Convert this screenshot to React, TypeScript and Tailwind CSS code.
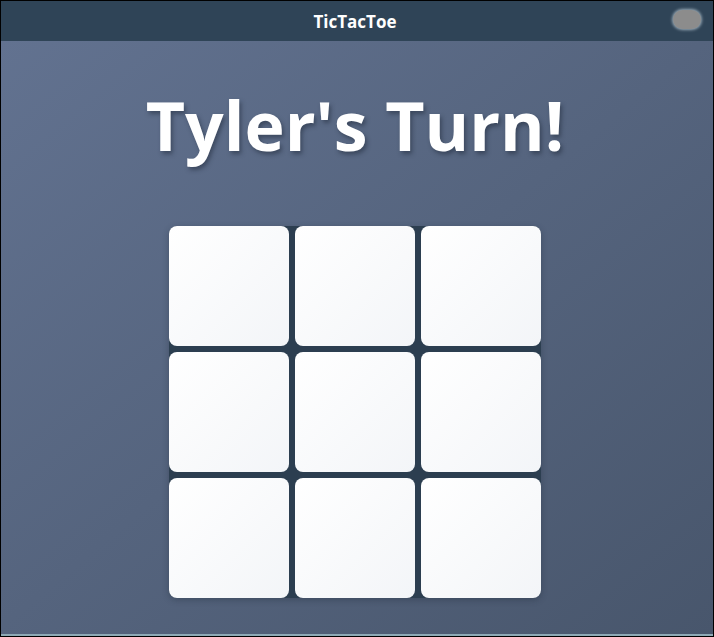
import React from 'react';

const cells = [0, 1, 2, 3, 4, 5, 6, 7, 8];

export default function App() {
  return (
    <div className="h-[637px] w-[714px] border border-black bg-black flex flex-col overflow-hidden font-['Open_Sans',sans-serif]">
      {/* title bar */}
      <div className="relative h-[40px] shrink-0 bg-[#2f4457] flex items-center justify-center pr-[4px]">
        <span className="text-white font-bold text-[17px] leading-none">TicTacToe</span>
        <div className="absolute right-[12px] top-[9px] h-[19px] w-[28px] rounded-full bg-[#8c8c8c] shadow-[0_0_3px_1px_rgba(200,215,225,0.7)]" />
      </div>

      {/* game area */}
      <div className="flex-1 flex flex-col items-center pr-[4px] bg-gradient-to-br from-[#627290] to-[#48566c] border-b-2 border-[#8eaab6]">
        <h1 className="mt-[50px] text-white font-bold text-[68px] leading-[68px] [text-shadow:2px_3px_4px_rgba(30,40,55,0.5)]">
          Tyler's Turn!
        </h1>
        <div className="mt-[67px] grid grid-cols-3 gap-[6px] bg-[#2c3e50] rounded-[8px] shadow-[0_2px_6px_rgba(30,40,55,0.35)]">
          {cells.map((c) => (
            <div
              key={c}
              className="h-[120px] w-[120px] rounded-[8px] bg-gradient-to-br from-white to-[#f3f5f8]"
            />
          ))}
        </div>
      </div>
    </div>
  );
}
